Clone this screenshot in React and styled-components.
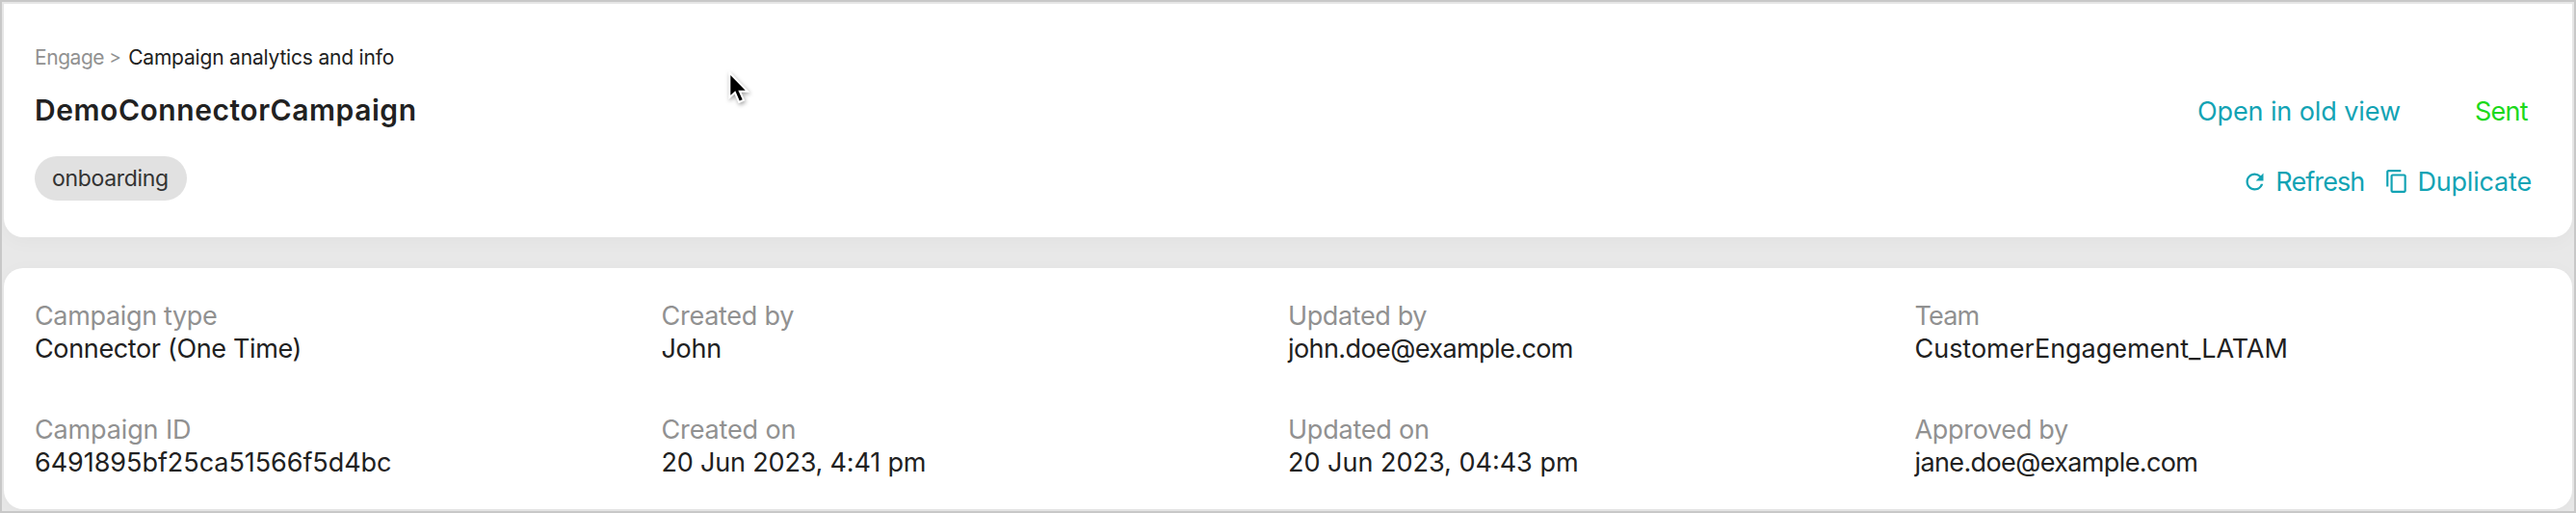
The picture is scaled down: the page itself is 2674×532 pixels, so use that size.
import React from "react";
import styled, { createGlobalStyle } from "styled-components";
import { MdContentCopy, MdRefresh } from "react-icons/md";

const details = [
  { label: "Campaign type", value: "Connector (One Time)", labelGap: -0.35, valueGap: -0.36 },
  { label: "Created by", value: "John", labelGap: -0.26, valueGap: -0.3 },
  { label: "Updated by", value: "john.doe@example.com", labelGap: -0.38, valueGap: -0.58 },
  { label: "Team", value: "CustomerEngagement_LATAM", labelGap: -0.8, valueGap: -0.03 },
  { label: "Campaign ID", value: "6491895bf25ca51566f5d4bc", labelGap: -0.14, valueGap: -0.05 },
  { label: "Created on", value: "20 Jun 2023, 4:41 pm", labelGap: -0.14, valueGap: -0.18 },
  { label: "Updated on", value: "20 Jun 2023, 04:43 pm", labelGap: -0.22, valueGap: 0 },
  { label: "Approved by", value: "jane.doe@example.com", labelGap: -0.32, valueGap: -0.62 },
];

function App() {
  return (
    <>
      <GlobalStyle />
      <Page>
        <HeaderCard>
          <HeaderInfo>
            <Breadcrumb>
              <Crumb $gap={-0.45}>Engage</Crumb>
              <Separator>&gt;</Separator>
              <Crumb $active $gap={-0.19}>
                Campaign analytics and info
              </Crumb>
            </Breadcrumb>
            <Title>DemoConnectorCampaign</Title>
            <Tag>onboarding</Tag>
          </HeaderInfo>
          <HeaderActions>
            <ActionRow $space="77px">
              <Action $gap={-0.09}>Open in old view</Action>
              <Status>Sent</Status>
            </ActionRow>
            <ActionRow $space="21px">
              <Action $gap={-0.9}>
                <MdRefresh size={27} />
                <span>Refresh</span>
              </Action>
              <Action $gap={-0.18}>
                <MdContentCopy size={26} />
                <span>Duplicate</span>
              </Action>
            </ActionRow>
          </HeaderActions>
        </HeaderCard>
        <DetailsCard>
          {details.map((item) => (
            <Detail key={item.label}>
              <Label $gap={item.labelGap}>{item.label}</Label>
              <Value $gap={item.valueGap}>{item.value}</Value>
            </Detail>
          ))}
        </DetailsCard>
        <Cursor width="24" height="36" viewBox="0 0 24 36">
          <path
            d="M2.3 3v20.7l5-4.5 4.4 10.4 3-1.3-4.4-9.6h7.4z"
            fill="#000"
            stroke="#fff"
            strokeWidth="4"
            strokeLinejoin="miter"
            paintOrder="stroke"
          />
        </Cursor>
      </Page>
    </>
  );
}

export default App;

const GlobalStyle = createGlobalStyle`
  * {
    box-sizing: border-box;
  }
  body {
    margin: 0;
    font-family: Inter, "Liberation Sans", sans-serif;
    color: #212121;
  }
`;

const Page = styled.div`
  position: relative;
  display: flex;
  flex-direction: column;
  gap: 32px;
  height: 532px;
  padding: 2px;
  border: 2px solid #c8c8c8;
  background: #e8e8e8;
  overflow: hidden;
`;

const Card = styled.div`
  background: #fff;
  border-radius: 20px;
  box-shadow: 0 4px 20px rgba(0, 0, 0, 0.03);
`;

const HeaderCard = styled(Card)`
  display: flex;
  justify-content: space-between;
  height: 242px;
  padding: 42px 42px 0 32px;
  border-radius: 0 0 20px 20px;
`;

const HeaderInfo = styled.div`
  display: flex;
  flex-direction: column;
  align-items: flex-start;
`;

const Breadcrumb = styled.div`
  display: flex;
  font-size: 21px;
  line-height: 28px;
`;

const Crumb = styled.span`
  color: ${(props) => (props.$active ? "#212121" : "#919191")};
  letter-spacing: ${(props) => props.$gap}px;
`;

const Separator = styled.span`
  width: 25px;
  padding-left: 5px;
  font-size: 19px;
  color: #919191;
`;

const Title = styled.h1`
  margin: 20px 0 28px;
  font-size: 30px;
  font-weight: 600;
  line-height: 40px;
  letter-spacing: 0.55px;
`;

const Tag = styled.span`
  height: 46px;
  width: 158px;
  padding: 0 18px;
  border-radius: 23px;
  background: #e1e1e1;
  color: #333;
  font-size: 23px;
  line-height: 46px;
  letter-spacing: -0.32px;
`;

const HeaderActions = styled.div`
  display: flex;
  flex-direction: column;
  align-items: flex-end;
  gap: 39px;
  padding-top: 53px;
`;

const ActionRow = styled.div`
  display: flex;
  gap: ${(props) => props.$space};
  font-size: 27px;
  line-height: 34px;
`;

const Action = styled.a`
  display: flex;
  align-items: center;
  gap: 8px;
  color: #12a3b4;
  letter-spacing: ${(props) => props.$gap}px;
  cursor: pointer;

  svg {
    margin-bottom: 2px;
  }
`;

const Status = styled.span`
  color: #1bd91b;
  letter-spacing: -0.7px;
  padding-right: 4px;
`;

const DetailsCard = styled(Card)`
  display: grid;
  grid-template-columns: repeat(4, 1fr);
  align-content: start;
  row-gap: 50px;
  height: 250px;
  padding: 33px 32px 0;
`;

const Detail = styled.div`
  font-size: 27px;
  line-height: 34px;
`;

const Label = styled.div`
  color: #919191;
  letter-spacing: ${(props) => props.$gap}px;
`;

const Value = styled.div`
  letter-spacing: ${(props) => props.$gap}px;
`;

const Cursor = styled.svg`
  position: absolute;
  left: 754px;
  top: 73px;
  overflow: visible;
  filter: drop-shadow(1px 2px 2px rgba(0, 0, 0, 0.35));
`;
